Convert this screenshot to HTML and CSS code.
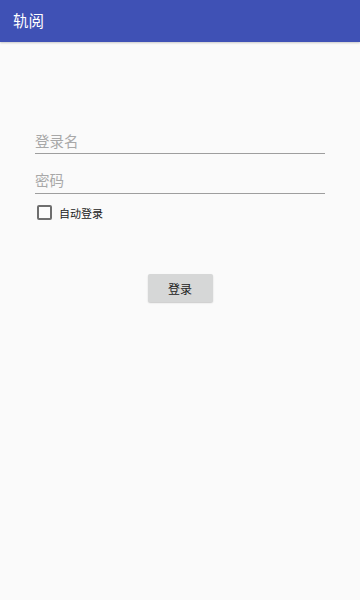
FILE: index.html
```html
<!DOCTYPE html>
<html lang="zh">
<head>
<meta charset="utf-8">
<link rel="stylesheet" href="styles.css">
</head>
<body>
<header class="appbar"><span class="title">轨阅</span></header>
<main class="form">
  <div class="field"><span class="placeholder">登录名</span></div>
  <div class="field"><span class="placeholder">密码</span></div>
  <label class="check"><span class="box"></span><span class="check-label">自动登录</span></label>
  <div class="actions"><button class="btn">登录</button></div>
</main>
</body>
</html>
```
FILE: styles.css
```css
html, body {
  margin: 0;
  padding: 0;
  background: #fafafa;
  font-family: "Noto Sans CJK SC", "Roboto", sans-serif;
  width: 360px;
  height: 600px;
  overflow: hidden;
}
.appbar {
  height: 42px;
  background: #3f51b5;
  display: flex;
  align-items: center;
  padding-left: 13px;
  box-shadow: 0 1px 2px rgba(0,0,0,0.2);
}
.title {
  color: #fff;
  font-size: 15.5px;
  line-height: 1;
}
.form {
  padding: 86px 35px 0 35px;
  display: flex;
  flex-direction: column;
}
.field {
  height: 20px;
  border-bottom: 1.5px solid #9e9e9e;
  display: flex;
  align-items: flex-end;
  padding-bottom: 5px;
}
.field + .field {
  margin-top: 13.5px;
}
.placeholder {
  color: #a8a8a8;
  font-size: 14.5px;
  line-height: 1;
}
.check {
  display: flex;
  align-items: center;
  margin-top: 11px;
  margin-left: 2px;
}
.box {
  width: 11px;
  height: 11px;
  border: 2px solid #6e6e6e;
  border-radius: 2px;
}
.check-label {
  margin-left: 7px;
  font-size: 11px;
  color: #222;
}
.actions {
  display: flex;
  justify-content: center;
  margin-top: 53.5px;
}
.btn {
  width: 65px;
  height: 28px;
  background: #d6d7d7;
  border: none;
  border-radius: 2px;
  box-shadow: 0 1px 1.5px rgba(0,0,0,0.2);
  font-family: "Noto Sans CJK SC", sans-serif;
  font-size: 12px;
  color: #222;
  padding: 0;
}
```
